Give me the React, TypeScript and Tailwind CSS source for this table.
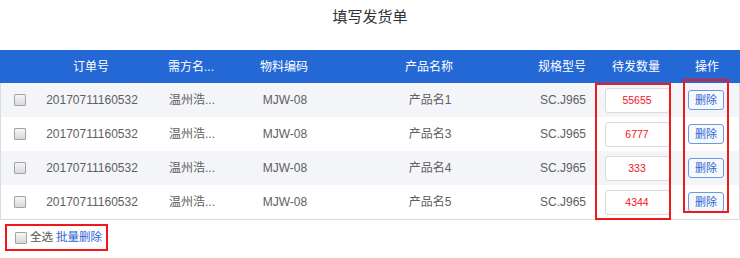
const rows = [
  { id: 1, order: '20170711160532', buyer: '温州浩...', code: 'MJW-08', name: '产品名1', spec: 'SC.J965', qty: '55655' },
  { id: 2, order: '20170711160532', buyer: '温州浩...', code: 'MJW-08', name: '产品名3', spec: 'SC.J965', qty: '6777' },
  { id: 3, order: '20170711160532', buyer: '温州浩...', code: 'MJW-08', name: '产品名4', spec: 'SC.J965', qty: '333' },
  { id: 4, order: '20170711160532', buyer: '温州浩...', code: 'MJW-08', name: '产品名5', spec: 'SC.J965', qty: '4344' },
]

const cols = 'grid grid-cols-[36px_110px_90px_96px_194px_72px_76px_1fr] items-center'

function Checkbox() {
  return <span className="block shrink-0 w-[12px] h-[12px] border border-[#a3a3a3] rounded-[1px] bg-gradient-to-b from-[#f6f6f6] to-[#d9d9d9]" />
}

export default function App() {
  return (
    <div
      className="relative w-[740px] h-[258px] bg-white overflow-hidden whitespace-nowrap"
      style={{ fontFamily: '"Liberation Sans", "Noto Sans CJK SC", sans-serif' }}
    >
      <div className="h-[50px] pt-[7px] text-center text-[15px] leading-[20px] text-[#333]">填写发货单</div>

      <div className={`${cols} h-[33px] bg-[#2468d6] text-white text-[12px] text-center`}>
        <span />
        <span>订单号</span>
        <span>需方名...</span>
        <span>物料编码</span>
        <span>产品名称</span>
        <span>规格型号</span>
        <span>待发数量</span>
        <span>操作</span>
      </div>

      <div className="border-x border-b border-[#dcdcdc]">
        {rows.map((r, i) => (
          <div
            key={r.id}
            className={`${cols} h-[34px] text-[12px] text-[#606060] text-center ${i % 2 === 0 ? 'bg-[#f4f5f9]' : 'bg-white'}`}
          >
            <div className="flex justify-center pl-[1px]"><Checkbox /></div>
            <span>{r.order}</span>
            <span>{r.buyer}</span>
            <span>{r.code}</span>
            <span>{r.name}</span>
            <span>{r.spec}</span>
            <div className="flex justify-center">
              <div className="w-[65px] h-[25px] flex items-center justify-center pt-[2px] border border-[#dadada] rounded-[3px] bg-white text-[#f0141e] text-[10.5px]">
                {r.qty}
              </div>
            </div>
            <div className="flex justify-center pr-[2px]">
              <button className="w-[36px] h-[20px] flex items-center justify-center border border-[#6b9ae4] rounded-[3px] bg-[#f7f9fe] text-[#2f68cf] text-[11px] leading-none">
                删除
              </button>
            </div>
          </div>
        ))}
      </div>

      <div className="mt-[4px] ml-[5px] w-[103px] h-[27px] border-2 border-[#f01818] flex items-center pl-[8px] gap-[3px] text-[11.5px]">
        <Checkbox />
        <span className="text-[#555]">全选</span>
        <span className="text-[#2a63d4]">批量删除</span>
      </div>

      {/* red annotation boxes */}
      <div className="absolute left-[595px] top-[83px] w-[76px] h-[137px] border-2 border-[#f01818]" />
      <div className="absolute left-[683px] top-[79px] w-[46px] h-[134px] border-2 border-[#f01818]" />
    </div>
  )
}
